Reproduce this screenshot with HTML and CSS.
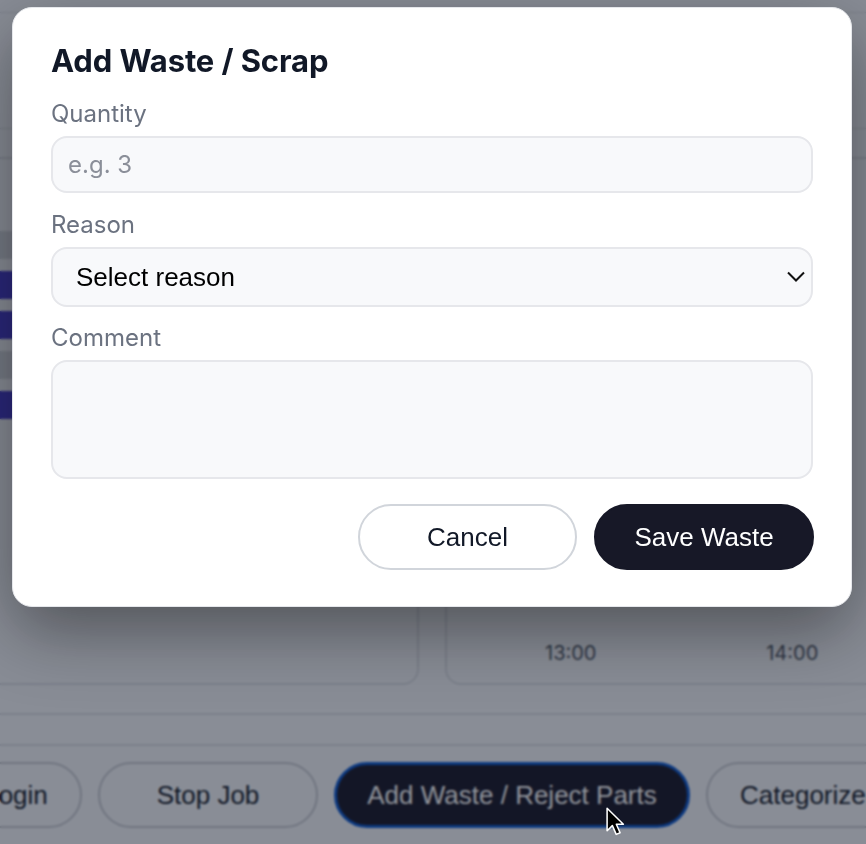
FILE: index.html
```html
<!DOCTYPE html>
<html lang="en">
<head>
<meta charset="utf-8">
<title>Add Waste / Scrap</title>
<link rel="stylesheet" href="styles.css">
</head>
<body>
<div class="page">
  <div class="topbar"></div>
  <div class="header"></div>
  <div class="subheader"></div>
  <div class="cards">
    <div class="card card-left">
      <div class="bars">
        <div class="bar bar-gray"></div>
        <div class="bar bar-blue"></div>
        <div class="bar bar-blue"></div>
        <div class="bar bar-gray"></div>
        <div class="bar bar-blue"></div>
      </div>
    </div>
    <div class="card card-right">
      <div class="axis">
        <span class="tick">13:00</span>
        <span class="tick">14:00</span>
      </div>
    </div>
  </div>
  <div class="footer-top"></div>
  <div class="actions">
    <button class="pill pill-login">Login</button>
    <button class="pill pill-stop">Stop Job</button>
    <button class="pill pill-active">Add Waste / Reject Parts</button>
    <button class="pill">Categorize</button>
  </div>
</div>

<div class="overlay">
  <div class="modal">
    <h2 class="title">Add Waste / Scrap</h2>
    <div class="field">
      <label class="label" for="qty">Quantity</label>
      <input class="input" id="qty" type="text" placeholder="e.g. 3">
    </div>
    <div class="field field-reason">
      <label class="label" for="reason">Reason</label>
      <div class="select-wrap">
        <select class="select" id="reason">
          <option>Select reason</option>
        </select>
        <svg class="chevron" width="18" height="11" viewBox="0 0 18 11"><path d="M1 1.5 L9 9.5 L17 1.5" fill="none" stroke="#111" stroke-width="2"/></svg>
      </div>
    </div>
    <div class="field field-comment">
      <label class="label" for="comment">Comment</label>
      <textarea class="textarea" id="comment"></textarea>
    </div>
    <div class="buttons">
      <button class="btn btn-cancel">Cancel</button>
      <button class="btn btn-save">Save Waste</button>
    </div>
  </div>
</div>

<svg class="cursor" width="22" height="31" viewBox="0 0 20 28">
  <path d="M1 1 L1 21.5 L5.8 16.8 L9.3 24.8 L12.8 23.3 L9.4 15.6 L15.8 15.6 Z" fill="#000" stroke="#fff" stroke-width="1.4" stroke-linejoin="round"/>
</svg>
</body>
</html>
```

FILE: styles.css
```css
* { box-sizing: border-box; }

html, body {
  margin: 0;
  padding: 0;
}

body {
  width: 866px;
  height: 844px;
  overflow: hidden;
  background: #f4f6fa;
  font-family: Inter, "Liberation Sans", sans-serif;
}

.page {
  width: 866px;
  overflow: hidden;
}

.topbar {
  height: 13px;
  border-bottom: 1px solid #dadde3;
}

.header {
  height: 116px;
  border-bottom: 1px solid #dadde3;
}

.subheader {
  height: 28px;
}

.cards {
  display: flex;
  gap: 26px;
  margin-left: -20px;
}

.card {
  flex-shrink: 0;
  height: 528px;
  border: 2px solid #dadde3;
  border-radius: 16px;
  background: #f4f6fa;
}

.card-left {
  width: 439px;
  padding-top: 72px;
}

.bars {
  display: flex;
  flex-direction: column;
  gap: 12px;
}

.bar {
  width: 200px;
  height: 28px;
}

.bar-gray { background: #d3d6dd; }
.bar-blue { background: #4338ca; }

.card-right {
  width: 460px;
  display: flex;
  flex-direction: column;
  justify-content: flex-end;
  padding: 0 0 18px 13px;
}

.axis {
  display: flex;
}

.tick {
  width: 225px;
  text-align: center;
  font: 400 20px/24px Inter, sans-serif;
  color: #4b5563;
}

.footer-top {
  height: 31px;
  margin-top: 28px;
  border-top: 2px solid #dadde3;
}

.actions {
  display: flex;
  gap: 16px;
  padding-top: 16px;
  border-top: 2px solid #dadde3;
}

.pill {
  flex-shrink: 0;
  height: 66px;
  padding: 0 32px;
  border: 2px solid #c5c8cf;
  border-radius: 999px;
  background: transparent;
  font: 400 26px "Liberation Sans", Arial, sans-serif;
  color: #111827;
  white-space: nowrap;
}

.pill-login {
  width: 132px;
  margin-left: -50px;
  padding: 0;
}

.pill-stop {
  width: 220px;
}

.pill-active {
  width: 356px;
  padding: 0;
  background: #161627;
  border: 3px solid #0a58d0;
  color: #ffffff;
}

.overlay {
  position: fixed;
  inset: 0;
  display: flex;
  align-items: flex-start;
  justify-content: flex-start;
  padding: 7px 0 0 12px;
  background: rgba(17, 24, 39, 0.47);
  backdrop-filter: blur(0.8px);
}

.modal {
  width: 840px;
  background: #ffffff;
  border: 1px solid #e5e7eb;
  border-radius: 20px;
  padding: 36px 38px;
  box-shadow: 0 24px 70px rgba(0, 0, 0, 0.42);
}

.title {
  margin: 0 0 22px;
  font: 700 31px/34px Inter, sans-serif;
  color: #111827;
  letter-spacing: -0.1px;
}

.label {
  display: block;
  margin-bottom: 8px;
  font: 400 24px/28px Inter, sans-serif;
  color: #6b7280;
}

.field-reason { margin-top: 18px; }
.field-comment { margin-top: 17px; }

.input,
.select,
.textarea {
  display: block;
  width: 100%;
  border: 2px solid #e6e7eb;
  border-radius: 16px;
  background: #f8f9fb;
  outline: none;
}

.input {
  height: 57px;
  padding: 0 15px;
  font: 400 24px Inter, sans-serif;
  color: #111827;
}

.input::placeholder {
  color: #8b8f99;
}

.select-wrap {
  position: relative;
}

.select {
  height: 60px;
  padding: 0 40px 0 23px;
  appearance: none;
  -webkit-appearance: none;
  font: 400 26px "Liberation Sans", Arial, sans-serif;
  color: #000000;
}

.chevron {
  position: absolute;
  right: 8px;
  top: 24px;
  pointer-events: none;
}

.textarea {
  height: 119px;
  resize: none;
  padding: 12px 15px;
  font: 400 24px Inter, sans-serif;
}

.buttons {
  display: flex;
  justify-content: flex-end;
  gap: 17px;
  margin-top: 25px;
  margin-right: -1px;
}

.btn {
  width: 220px;
  height: 66px;
  border-radius: 999px;
  font: 400 26px "Liberation Sans", Arial, sans-serif;
}

.btn-cancel {
  width: 219px;
  background: #ffffff;
  border: 2px solid #d1d5db;
  color: #111827;
}

.btn-save {
  background: #171827;
  border: 2px solid #171827;
  color: #ffffff;
}

.cursor {
  position: fixed;
  left: 606px;
  top: 807px;
}
```
